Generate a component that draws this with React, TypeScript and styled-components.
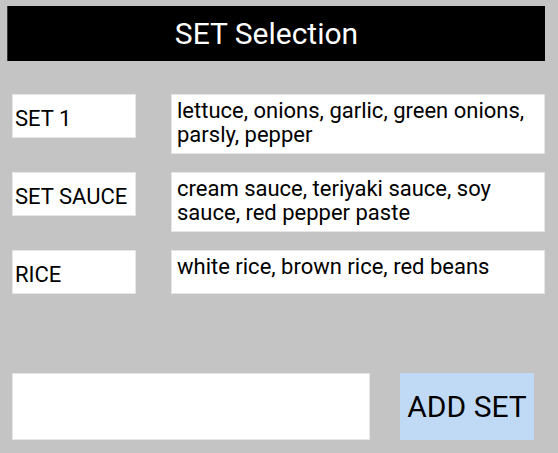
import React from "react";
import styled, { createGlobalStyle } from "styled-components";

const GlobalStyle = createGlobalStyle`
  html, body {
    margin: 0;
    padding: 0;
    background: #c4c4c4;
  }
  body {
    font-family: Roboto, "Noto Sans", "Liberation Sans", sans-serif;
    color: #000;
  }
`;

const Page = styled.div`
  width: 558px;
  height: 453px;
  box-sizing: border-box;
  padding-top: 6px;
  background: #c4c4c4;
  overflow: hidden;
`;

const Header = styled.div`
  margin: 0 13px 0 7px;
  height: 55px;
  padding-right: 20px;
  background: #000;
  border-left: 1px solid #3a3a3a;
  box-sizing: border-box;
  display: flex;
  align-items: center;
  justify-content: center;
  color: #fff;
  font-size: 30px;
`;

const List = styled.div`
  margin-top: 33px;
  padding: 0 13px 0 12px;
  display: flex;
  flex-direction: column;
  gap: 18px;
`;

const Row = styled.div`
  display: grid;
  grid-template-columns: 124px 1fr;
  column-gap: 35px;
  align-items: start;
`;

const Label = styled.div`
  height: 44px;
  box-sizing: border-box;
  background: #fff;
  padding: 11px 3px 0 2px;
  font-size: 22px;
  white-space: nowrap;
  border: 1px solid #e6e6e6;
`;

const Desc = styled.div`
  min-height: 44px;
  box-sizing: border-box;
  background: #fff;
  padding: 4px 6px 6px 5px;
  font-size: 22px;
  line-height: 24px;
  border: 1px solid #e6e6e6;
`;

const Footer = styled.div`
  margin-top: 79px;
  padding: 0 24px 0 12px;
  display: flex;
  gap: 30px;
`;

const Input = styled.div`
  width: 358px;
  height: 67px;
  box-sizing: border-box;
  background: #fff;
  border: 1px solid #e6e6e6;
`;

const AddButton = styled.div`
  width: 134px;
  height: 67px;
  box-sizing: border-box;
  background: #c0daf5;
  display: flex;
  align-items: center;
  justify-content: center;
  font-size: 30px;
  color: #000;
`;

const sets = [
  { name: "SET 1", items: "lettuce, onions, garlic, green onions, parsly, pepper" },
  { name: "SET SAUCE", items: "cream sauce, teriyaki sauce, soy sauce, red pepper paste" },
  { name: "RICE", items: "white rice, brown rice, red beans" },
];

export default function App() {
  return (
    <>
      <GlobalStyle />
      <Page>
        <Header>SET Selection</Header>
        <List>
          {sets.map((s) => (
            <Row key={s.name}>
              <Label>{s.name}</Label>
              <Desc>{s.items}</Desc>
            </Row>
          ))}
        </List>
        <Footer>
          <Input />
          <AddButton>ADD SET</AddButton>
        </Footer>
      </Page>
    </>
  );
}
